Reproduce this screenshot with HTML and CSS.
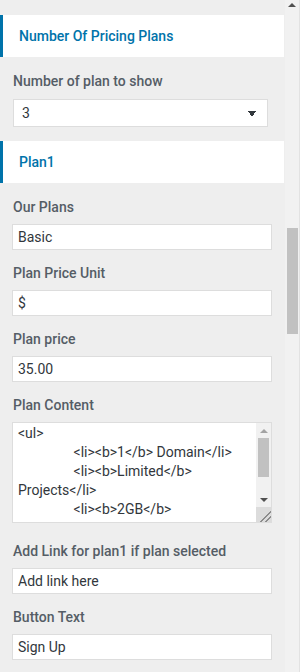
FILE: index.html
```html
<html>
    <head>
        <title>Pricing Plans</title>
        <link rel="stylesheet" href="styles.css">
    </head>
    <body>
        <div class="frame">
            <div class="panel">
                <h3 class="section-title">Number Of Pricing Plans</h3>
                <div class="control">
                    <label class="control-label" for="plan-count">Number of plan to show</label>
                    <select id="plan-count" class="plan-select">
                        <option>1</option>
                        <option>2</option>
                        <option selected>3</option>
                        <option>4</option>
                    </select>
                </div>

                <h3 class="section-title">Plan1</h3>
                <div class="control">
                    <label class="control-label" for="plan-name">Our Plans</label>
                    <input type="text" id="plan-name" value="Basic" />
                </div>
                <div class="control">
                    <label class="control-label" for="price-unit">Plan Price Unit</label>
                    <input type="text" id="price-unit" value="$" />
                </div>
                <div class="control">
                    <label class="control-label" for="price">Plan price</label>
                    <input type="text" id="price" value="35.00" />
                </div>
                <div class="control">
                    <label class="control-label" for="content">Plan Content</label>
                    <div class="editor">
                        <textarea id="content" class="plan-content">&lt;ul&gt;
		&lt;li&gt;&lt;b&gt;1&lt;/b&gt; Domain&lt;/li&gt;
		&lt;li&gt;&lt;b&gt;Limited&lt;/b&gt; Projects&lt;/li&gt;
		&lt;li&gt;&lt;b&gt;2GB&lt;/b&gt; Bandwidth&lt;/li&gt;
&lt;/ul&gt;</textarea>
                        <div class="editor-scrollbar">
                            <div class="sb-button sb-up"></div>
                            <div class="sb-track"><div class="sb-thumb"></div></div>
                            <div class="sb-button sb-down"></div>
                            <div class="sb-corner"></div>
                        </div>
                    </div>
                </div>
                <div class="control">
                    <label class="control-label" for="link">Add Link for plan1 if plan selected</label>
                    <input type="text" id="link" value="Add link here" />
                </div>
                <div class="control">
                    <label class="control-label" for="button-text">Button Text</label>
                    <input type="text" id="button-text" value="Sign Up" />
                </div>
            </div>
            <div class="scrollbar">
                <div class="scroll-arrow"></div>
                <div class="scroll-thumb"></div>
            </div>
        </div>
    </body>
</html>
```
FILE: styles.css
```css
body {
    margin: 0;
    height: 672px;
    overflow: hidden;
    background-color: #eeeeee;
    font-family: Roboto, "Liberation Sans", sans-serif;
    color: #555d66;
}
.frame {
    display: flex;
    height: 672px;
}
.panel {
    width: 285px;
    padding-top: 15px;
}
.section-title {
    margin: 0 1px 14px 0;
    height: 42px;
    display: flex;
    align-items: center;
    padding-left: 16px;
    border-left: 3px solid #0073aa;
    background-color: #fff;
    color: #0073aa;
    font-size: 14px;
    font-weight: 500;
}
.control {
    padding: 0 12px;
    margin-bottom: 13px;
}
.control-label {
    display: block;
    padding-left: 1px;
    line-height: 20px;
    margin-bottom: 7px;
    font-size: 14px;
    font-weight: 500;
    color: #555d66;
}
input[type=text] {
    display: block;
    width: 260px;
    height: 26px;
    padding: 0 5px;
    box-sizing: border-box;
    border: 1px solid #dddddd;
    border-radius: 0;
    background-color: #fff;
    color: #32373c;
    font-family: Roboto, "Liberation Sans", sans-serif;
    font-size: 14px;
    outline: none;
}
.plan-select {
    display: block;
    appearance: none;
    -webkit-appearance: none;
    margin: 8px 0 14px 1px;
    width: 255px;
    height: 28px;
    padding: 0 8px;
    border: 1px solid #dddddd;
    border-radius: 0;
    color: #32373c;
    font-family: Roboto, "Liberation Sans", sans-serif;
    font-size: 14px;
    background:
        linear-gradient(to bottom left, #32373c 50%, transparent 50%) calc(100% - 15px) 11px / 4px 6px no-repeat,
        linear-gradient(to bottom right, #32373c 50%, transparent 50%) calc(100% - 11px) 11px / 4px 6px no-repeat,
        #fff;
}

/* textarea + its scrollbar */
.editor {
    display: flex;
    width: 260px;
    height: 101px;
    box-sizing: border-box;
    border: 1px solid #dddddd;
    background-color: #fff;
    margin-bottom: 18px;
}
.plan-content {
    flex: 1;
    min-width: 0;
    height: 100%;
    box-sizing: border-box;
    padding: 1px 5px;
    border: none;
    outline: none;
    resize: none;
    overflow: hidden;
    color: #32373c;
    font-family: Roboto, "Liberation Sans", sans-serif;
    font-size: 14px;
    line-height: 19px;
    tab-size: 8;
}
.editor-scrollbar {
    width: 15px;
    display: flex;
    flex-direction: column;
    background-color: #f1f1f1;
}
.sb-button {
    height: 15px;
    display: flex;
    justify-content: center;
    align-items: center;
}
.sb-up::before {
    content: "";
    border-left: 4px solid transparent;
    border-right: 4px solid transparent;
    border-bottom: 4px solid #a3a3a3;
}
.sb-down::before {
    content: "";
    border-left: 4px solid transparent;
    border-right: 4px solid transparent;
    border-top: 4px solid #505050;
}
.sb-track {
    flex: 1;
}
.sb-thumb {
    margin: 0 2px;
    height: 39px;
    background-color: #c1c1c1;
}
.sb-corner {
    height: 15px;
    background:
        linear-gradient(to bottom right, transparent 62%, #8c8c8c 62%, #8c8c8c 67%, transparent 67%, transparent 80%, #8c8c8c 80%, #8c8c8c 85%, transparent 85%),
        #dcdcdc;
}

/* page scrollbar */
.scrollbar {
    width: 14px;
    border-right: 1px solid #e2e2e2;
    background-color: #f1f1f1;
}
.scroll-arrow {
    height: 15px;
    display: flex;
    justify-content: center;
    align-items: center;
}
.scroll-arrow::before {
    content: "";
    border-left: 4px solid transparent;
    border-right: 4px solid transparent;
    border-bottom: 4px solid #505050;
    margin-bottom: 5px;
}
.scroll-thumb {
    margin: 213px 0 0 2px;
    width: 11px;
    height: 106px;
    background-color: #c1c1c1;
}
```
